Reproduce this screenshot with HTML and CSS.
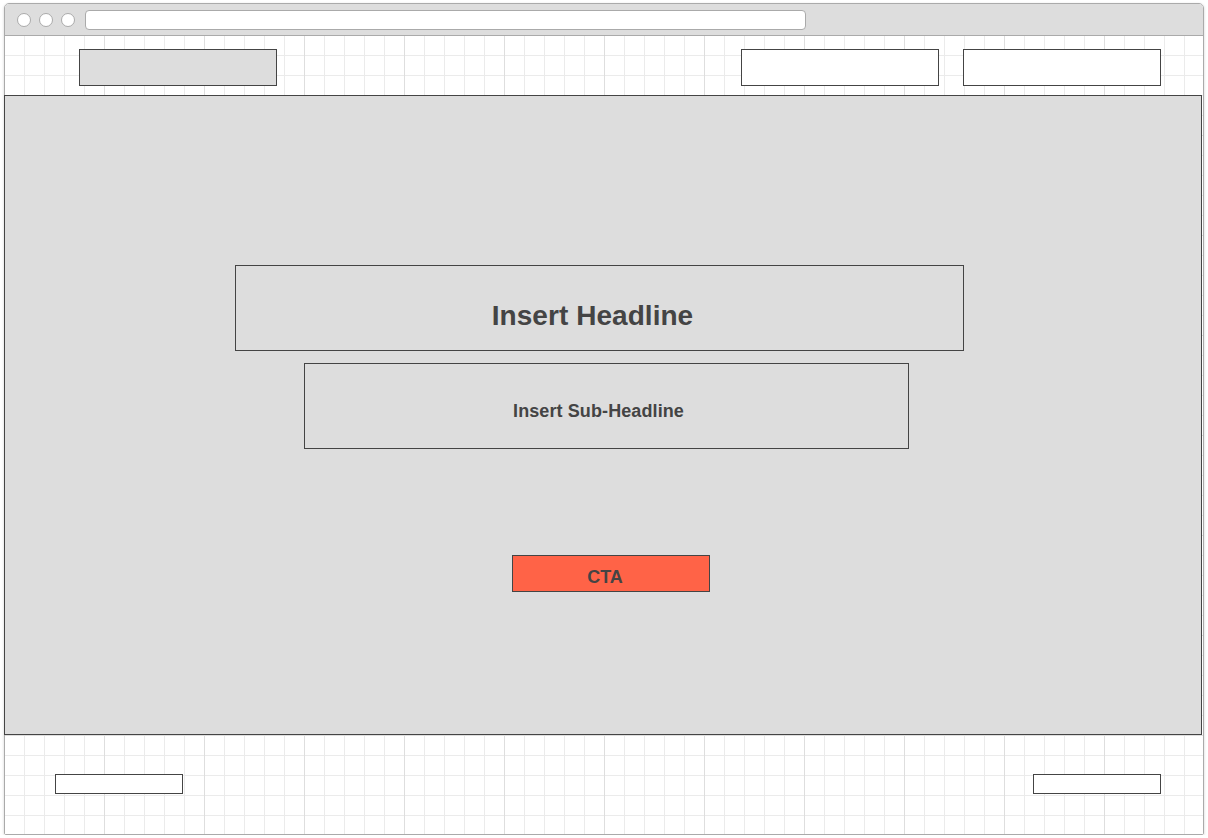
FILE: index.html
```html
<!DOCTYPE html>
<html lang="en">
<head>
<meta charset="utf-8">
<title>Landing page wireframe</title>
<link rel="stylesheet" href="styles.css">
</head>
<body>
<div class="window">
  <div class="titlebar">
    <span class="dot"></span>
    <span class="dot"></span>
    <span class="dot"></span>
    <div class="address"></div>
  </div>
  <div class="canvas">
    <header class="topbar">
      <div class="logo"></div>
      <nav class="nav">
        <div class="nav-item"></div>
        <div class="nav-item"></div>
      </nav>
    </header>
    <section class="hero">
      <h1 class="headline">Insert Headline</h1>
      <h2 class="subheadline">Insert Sub-Headline</h2>
      <a class="cta">CTA</a>
    </section>
    <footer class="footer">
      <div class="footer-link"></div>
      <div class="footer-link"></div>
    </footer>
  </div>
</div>
</body>
</html>
```
FILE: styles.css
```css
html, body {
  margin: 0;
  padding: 0;
  background: #fff;
}

body {
  font-family: "Liberation Sans", Arial, Helvetica, sans-serif;
  color: #444;
}

.window {
  margin: 3px 0 0 4px;
  width: 1200px;
  height: 832px;
  box-sizing: border-box;
  border: 1px solid #aaa;
  border-radius: 5px 5px 2px 2px;
  box-shadow: 0 1px 3px rgba(0, 0, 0, 0.18);
  display: flex;
  flex-direction: column;
}

.titlebar {
  height: 31px;
  flex: none;
  background: #ddd;
  border-bottom: 1px solid #aaa;
  border-radius: 4px 4px 0 0;
  display: flex;
  align-items: center;
  gap: 8px;
  padding-left: 12px;
}

.dot {
  width: 14px;
  height: 14px;
  box-sizing: border-box;
  border: 1px solid #aaa;
  border-radius: 50%;
  background: #fff;
}

.address {
  margin-left: 2px;
  width: 721px;
  height: 20px;
  box-sizing: border-box;
  border: 1px solid #aaa;
  border-radius: 4px;
  background: #fff;
}

.canvas {
  flex: 1;
  display: flex;
  flex-direction: column;
  background-color: #fff;
  background-image:
    linear-gradient(to right, #dedede 1px, transparent 1px),
    linear-gradient(to bottom, #dedede 1px, transparent 1px),
    linear-gradient(to right, #ebebeb 1px, transparent 1px),
    linear-gradient(to bottom, #ebebeb 1px, transparent 1px);
  background-size: 100px 100px, 100px 100px, 20px 20px, 20px 20px;
  background-position: 99px 0, 0 99px, 19px 0, 0 19px;
}

.topbar {
  height: 59px;
  flex: none;
  box-sizing: border-box;
  padding: 13px 42px 0 74px;
  display: flex;
  align-items: flex-start;
  justify-content: space-between;
}

.logo,
.nav-item {
  width: 198px;
  height: 37px;
  box-sizing: border-box;
  border: 1px solid #444;
}

.logo {
  background: #ddd;
}

.nav-item {
  background: #fff;
}

.nav {
  display: flex;
  gap: 24px;
}

.hero {
  flex: none;
  margin-left: -1px;
  width: 1198px;
  height: 640px;
  box-sizing: border-box;
  border: 1px solid #444;
  background: #ddd;
  padding-top: 169px;
  display: flex;
  flex-direction: column;
  align-items: flex-start;
}

.headline,
.subheadline,
.cta {
  box-sizing: border-box;
  border: 1px solid #444;
  text-align: center;
  font-weight: 700;
  color: #444;
}

.headline {
  margin: 0 0 0 230px;
  width: 729px;
  height: 86px;
  padding: 34px 14px 0 0;
  font-size: 28px;
  line-height: 32px;
  letter-spacing: 0.05px;
}

.subheadline {
  margin: 12px 0 0 299px;
  width: 605px;
  height: 86px;
  padding: 36px 16px 0 0;
  font-size: 18px;
  line-height: 22px;
  letter-spacing: 0.1px;
}

.cta {
  display: block;
  margin: 106px 0 0 507px;
  width: 198px;
  height: 37px;
  padding: 10px 12px 0 0;
  background: #ff6347;
  font-size: 18px;
  line-height: 22px;
  text-decoration: none;
}

.footer {
  flex: 1;
  box-sizing: border-box;
  padding: 39px 42px 0 50px;
  display: flex;
  align-items: flex-start;
  justify-content: space-between;
}

.footer-link {
  width: 128px;
  height: 20px;
  box-sizing: border-box;
  border: 1px solid #444;
  background: #fff;
}
```
